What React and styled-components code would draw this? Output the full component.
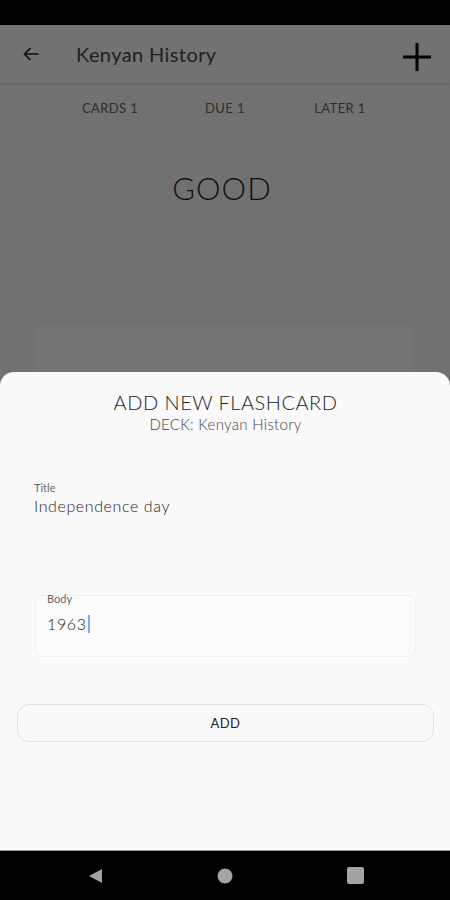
import styled, { createGlobalStyle } from "styled-components"

const Global = createGlobalStyle`
  html, body {
    margin: 0;
    padding: 0;
    background: #000;
  }
  * {
    box-sizing: border-box;
  }
`

const Screen = styled.div`
  width: 450px;
  height: 900px;
  display: flex;
  flex-direction: column;
  font-family: Lato, "Open Sans", sans-serif;
  overflow: hidden;
`

const StatusBar = styled.div`
  height: 25px;
  background: #000;
  flex-shrink: 0;
`

const Stage = styled.div`
  position: relative;
  flex: 1;
  background: #717171;
  display: flex;
  flex-direction: column;
  overflow: hidden;
`

const AppBar = styled.div`
  height: 58px;
  display: flex;
  align-items: center;
  padding: 0 16px 0 20px;
  background: #727272;
  box-shadow: 0 1px 2px rgba(0, 0, 0, 0.18);
  flex-shrink: 0;
`

const IconButton = styled.div`
  width: ${(p) => p.size}px;
  height: ${(p) => p.size}px;
  margin-top: ${(p) => p.drop || 0}px;
  display: flex;
  align-items: center;
  justify-content: center;
  color: #111;
`

const AppTitle = styled.div`
  flex: 1;
  margin-left: 32px;
  font-size: 20px;
  font-weight: 400;
  color: #1f1f1f;
  letter-spacing: 0.4px;
`

const Stats = styled.div`
  display: flex;
  justify-content: center;
  padding-top: 17px;
  height: 44px;
`

const Stat = styled.div`
  width: 115px;
  text-align: center;
  font-size: 13px;
  color: #2e2e2e;
  letter-spacing: 0.4px;
`

const Verdict = styled.div`
  margin-top: 42px;
  padding-right: 6px;
  text-align: center;
  font-size: 31px;
  font-weight: 300;
  color: #111;
  letter-spacing: 1px;
`

const CardBehind = styled.div`
  margin: 119px 37px 0 36px;
  height: 120px;
  background: #747474;
`

const Sheet = styled.div`
  position: absolute;
  left: 0;
  right: 0;
  bottom: 0;
  height: 478px;
  background: #fafafa;
  border-radius: 14px 14px 0 0;
  display: flex;
  flex-direction: column;
  padding: 18px 16px 0 17px;
`

const SheetHeading = styled.div`
  text-align: center;
  font-size: 20px;
  font-weight: 300;
  color: #1c1c1c;
  letter-spacing: 0.5px;
`

const SheetSub = styled.div`
  text-align: center;
  font-size: 15px;
  font-weight: 300;
  color: #444;
  margin-top: 1px;
  letter-spacing: 0.3px;
`

const Field = styled.div`
  margin: 48px 0 0 17px;
`

const Label = styled.div`
  font-size: 11px;
  color: #666;
`

const Value = styled.div`
  font-size: 16px;
  font-weight: 300;
  color: #1e1e1e;
  margin-top: ${(p) => p.gap || 2}px;
  letter-spacing: 0.6px;
  display: flex;
  align-items: center;
`

const BoxField = styled.div`
  margin: 80px 18px 0 18px;
  height: 62px;
  border: 1px solid #efefef;
  border-radius: 7px;
  background: #fbfbfb;
  padding: 0 11px;
`

const BoxLabel = styled(Label)`
  margin-top: -4px;
`

const Caret = styled.span`
  display: inline-block;
  width: 2px;
  height: 18px;
  background: #7aaef0;
  margin-left: 1px;
`

const AddButton = styled.div`
  margin-top: 47px;
  height: 38px;
  border: 1px solid #e2e2e2;
  border-radius: 12px;
  display: flex;
  align-items: center;
  justify-content: center;
  font-size: 13px;
  color: #222;
  background: #fafafa;
  letter-spacing: 0.4px;
`

const NavBar = styled.div`
  height: 50px;
  background: #000;
  display: flex;
  align-items: center;
  justify-content: center;
  gap: 100px;
  flex-shrink: 0;
  border-top: 1px solid #9a9a9a;
`

const NavSlot = styled.div`
  width: 30px;
  display: flex;
  justify-content: center;
`

const App = () => {
  return (
    <>
      <Global />
      <Screen>
        <StatusBar />
        <Stage>
          <AppBar>
            <IconButton size={24}>
              <svg width="20" height="20" viewBox="0 0 24 24" fill="none" stroke="#111" strokeWidth="2">
                <path d="M20 12H4M10 5l-7 7 7 7" />
              </svg>
            </IconButton>
            <AppTitle>Kenyan History</AppTitle>
            <IconButton size={34} drop={6}>
              <svg width="30" height="30" viewBox="0 0 30 30" fill="none" stroke="#000" strokeWidth="3">
                <path d="M15 1v28M1 15h28" />
              </svg>
            </IconButton>
          </AppBar>
          <Stats>
            <Stat>CARDS 1</Stat>
            <Stat>DUE 1</Stat>
            <Stat>LATER 1</Stat>
          </Stats>
          <Verdict>GOOD</Verdict>
          <CardBehind />

          <Sheet>
            <SheetHeading>ADD NEW FLASHCARD</SheetHeading>
            <SheetSub>DECK: Kenyan History</SheetSub>
            <Field>
              <Label>Title</Label>
              <Value>Independence day</Value>
            </Field>
            <BoxField>
              <BoxLabel>Body</BoxLabel>
              <Value gap={9}>
                1963
                <Caret />
              </Value>
            </BoxField>
            <AddButton>ADD</AddButton>
          </Sheet>
        </Stage>
        <NavBar>
          <NavSlot>
            <svg width="16" height="16" viewBox="0 0 16 16">
              <path d="M15 1v14L2 8z" fill="#a3a3a3" />
            </svg>
          </NavSlot>
          <NavSlot>
            <svg width="16" height="16" viewBox="0 0 16 16">
              <circle cx="8" cy="8" r="7.5" fill="#a3a3a3" />
            </svg>
          </NavSlot>
          <NavSlot>
            <svg width="17" height="17" viewBox="0 0 17 17">
              <rect x="0" y="0" width="17" height="17" rx="2" fill="#a3a3a3" />
            </svg>
          </NavSlot>
        </NavBar>
      </Screen>
    </>
  )
}

export default App
